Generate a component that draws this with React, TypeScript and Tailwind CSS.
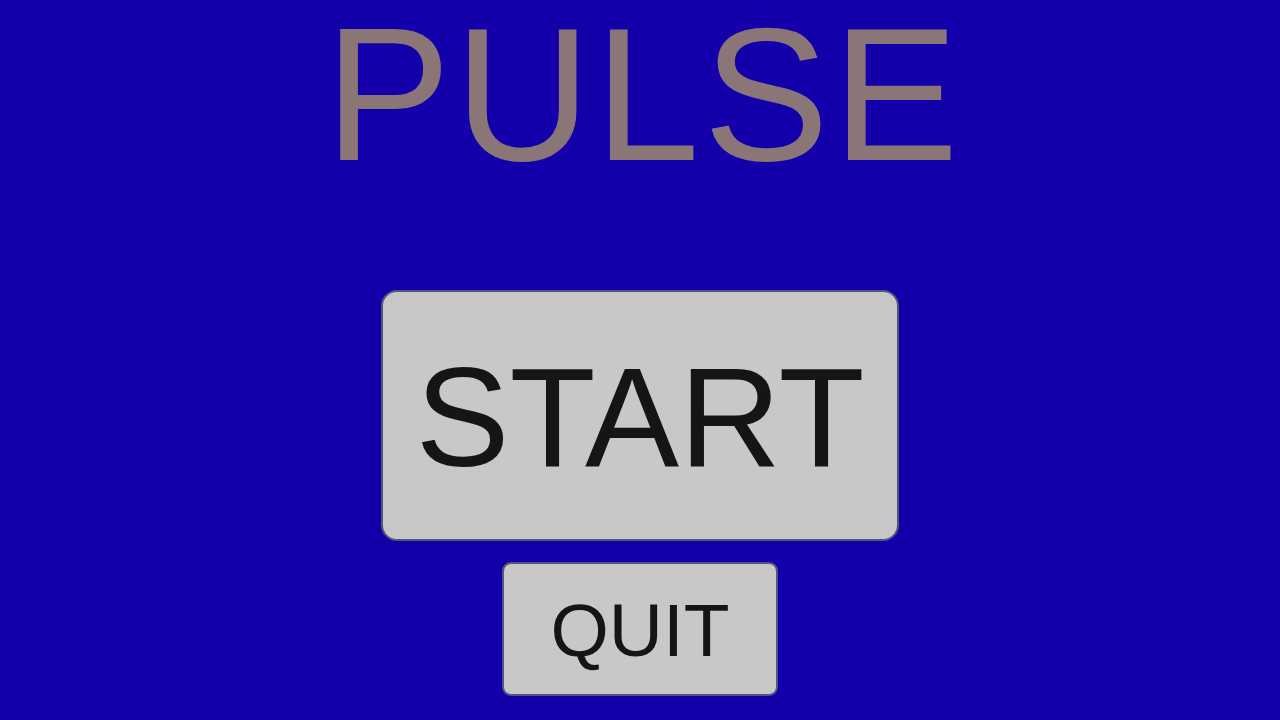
import React from 'react';

// Main menu for the game: title plus the two menu buttons
export default function App() {
  return (
    <div
      className="w-[1280px] h-[720px] bg-[#1400aa] flex flex-col items-center overflow-hidden"
      style={{ fontFamily: '"Liberation Sans", Arial, sans-serif' }}
    >
      <h1 className="-mt-[11px] text-[189px] leading-[212px] tracking-[3.5px] text-[#8a7676] ml-[7px]">PULSE</h1>

      <button className="mt-[89px] w-[518px] h-[251px] rounded-[16px] bg-[#c8c8c8] border-2 border-[#55557a] flex items-center justify-center pt-[3px]">
        <span className="text-[141px] leading-none text-[#151515]">START</span>
      </button>

      <button className="mt-[21px] w-[276px] h-[134px] rounded-[9px] bg-[#c8c8c8] border-2 border-[#55557a] flex items-center justify-center pt-[3px]">
        <span className="text-[75px] leading-none text-[#151515]">QUIT</span>
      </button>
    </div>
  );
}
